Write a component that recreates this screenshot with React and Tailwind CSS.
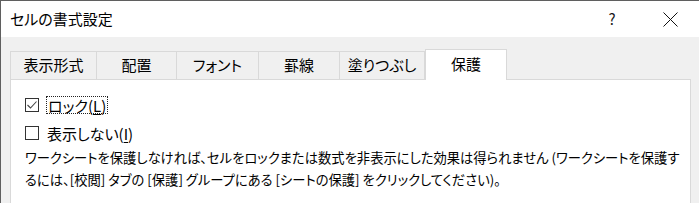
import React from "react";

const tabs = [
  { label: "表示形式", w: "w-[87px]" },
  { label: "配置", w: "w-[80px]" },
  { label: "フォント", w: "w-[82px]" },
  { label: "罫線", w: "w-[81px]" },
  { label: "塗りつぶし", w: "w-[85px]" },
];

function Checkbox({ checked }) {
  return (
    <span className="flex h-[14px] w-[14px] shrink-0 items-center justify-center border border-[#333333] bg-white">
      {checked && (
        <svg width="12" height="12" viewBox="0 0 12 12">
          <path d="M1.5 6 L4.5 9 L10.5 2.5" fill="none" stroke="#444444" strokeWidth="1.1" />
        </svg>
      )}
    </span>
  );
}

export default function App() {
  return (
    <div
      className="h-[203px] w-[699px] overflow-hidden border-l border-t border-[#5f5f5f] bg-[#f0f0f0] text-[#000000] [font-feature-settings:'palt']"
      style={{ fontFamily: '"Noto Sans CJK JP", "Noto Sans", sans-serif' }}
    >
      {/* title bar */}
      <div className="flex h-[36px] items-center bg-white pl-[9px] text-[15px]">
        <span>セルの書式設定</span>
        <span className="ml-auto w-[20px] text-center text-[15px] text-[#1a1a1a]">?</span>
        <span className="ml-[38px] mr-[19px] flex h-[20px] w-[20px] items-center justify-center">
          <svg width="15" height="15" viewBox="0 0 15 15">
            <path d="M0.5 0.5 L14.5 14.5 M14.5 0.5 L0.5 14.5" stroke="#111111" strokeWidth="1" />
          </svg>
        </span>
      </div>

      {/* tab strip */}
      <div className="mt-[12px] flex items-end pl-[9px]">
        {tabs.map((t, i) => (
          <div
            key={t.label}
            className={`${t.w} flex h-[28px] items-center justify-center border-t border-r border-[#d9d9d9] text-[15px] ${
              i === 0 ? "border-l" : ""
            }`}
          >
            {t.label}
          </div>
        ))}
        <div className="relative z-10 -mb-px flex h-[31px] w-[82px] items-center justify-center border-x border-t border-[#d9d9d9] bg-white pb-[2px] text-[15px]">
          保護
        </div>
      </div>

      {/* panel */}
      <div className="ml-[9px] h-[140px] w-[681px] border-l border-r border-t border-[#d9d9d9] bg-white pl-[14px] pt-[16px]">
        <div className="flex h-[18px] items-center">
          <Checkbox checked />
          <span className="ml-[7px] flex h-[18px] items-center border border-dotted border-[#222222] px-[1px] text-[15px] leading-none">
            ロック(<span className="underline underline-offset-2">L</span>)
          </span>
        </div>
        <div className="mt-[10px] flex h-[18px] items-center">
          <Checkbox />
          <span className="ml-[8px] text-[15px] leading-none">
            表示しない(<span className="underline underline-offset-2">I</span>)
          </span>
        </div>
        <p className="mt-[5px] whitespace-nowrap text-[13.3px] leading-[22px]">
          ワークシートを保護しなければ、セルをロックまたは数式を非表示にした効果は得られません (ワークシートを保護す
          <br />
          るには、[校閲] タブの [保護] グループにある [シートの保護] をクリックしてください)。
        </p>
      </div>
    </div>
  );
}
